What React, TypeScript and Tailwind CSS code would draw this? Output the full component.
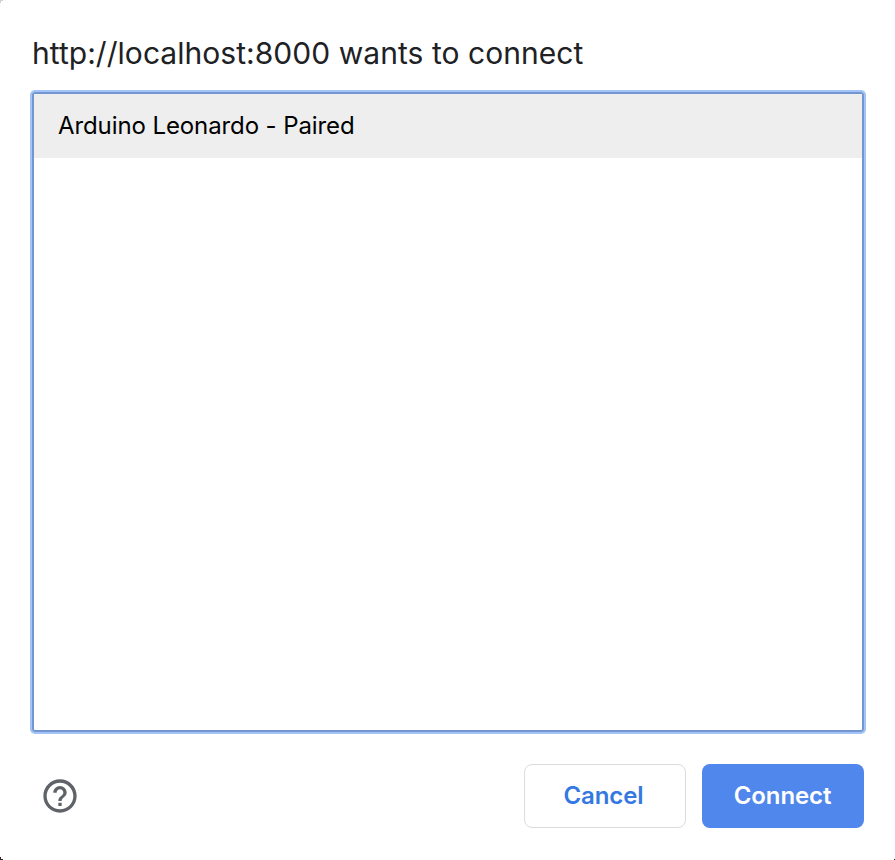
export default function App() {
  return (
    <main className="relative flex h-[860px] w-[895px] flex-col overflow-hidden bg-white px-8 font-['Inter',sans-serif]">
      <h1 className="mt-[33px] h-10 text-[30px] leading-10 tracking-[0.04px] whitespace-nowrap text-[#202124] [font-variant-ligatures:none]">http://localhost:8000 wants to connect</h1>
      <section className="mt-[19px] h-[640px] w-[832px] rounded-[3px] border-2 border-[#7396d0] ring-2 ring-[#a4c3f7]">
        <div className="h-16 bg-[#eeeeee] pl-6 text-[24px] leading-[64px] tracking-[-0.1px] text-black">Arduino Leonardo - Paired</div>
      </section>
      <footer className="mt-8 flex h-16 w-[832px] items-center">
        <svg className="ml-2 size-10" viewBox="0 0 24 24" fill="#5f6368" aria-label="Help">
          <path d="M11 18h2v-2h-2v2zm1-16C6.48 2 2 6.48 2 12s4.48 10 10 10 10-4.480 10-10S17.52 2 12 2zm0 18c-4.410 0-8-3.590-8-8s3.590-8 8-8 8 3.590 8 8-3.590 8-8 8zm0-14c-2.210 0-4 1.790-4 4h2c0-1.100.9-2 2-2s2 .9 2 2c0 2-3 1.750-3 5h2c0-2.250 3-2.500 3-5 0-2.210-1.790-4-4-4z" />
        </svg>
        <button className="ml-auto h-16 w-[162px] rounded-lg border border-[#dadce0] pr-[3px] text-[24px] font-[560] tracking-[-0.12px] text-[#3478e2]">Cancel</button>
        <button className="ml-4 h-16 w-[162px] rounded-lg bg-[#5087ec] pr-px text-[24px] font-[560] tracking-[-0.12px] text-white">Connect</button>
      </footer>
      <i className="absolute top-0 left-0 h-px w-[3px] bg-[#d0d0d0]" />
      <i className="absolute top-0 left-0 h-[3px] w-px bg-[#d0d0d0]" />
      <i className="absolute bottom-0 left-0 h-px w-[3px] bg-[#382020]" />
      <i className="absolute bottom-0 left-0 h-[3px] w-px bg-[#382020]" />
      <i className="absolute right-0 bottom-0 size-px bg-[#382020]" />
    </main>
  );
}
